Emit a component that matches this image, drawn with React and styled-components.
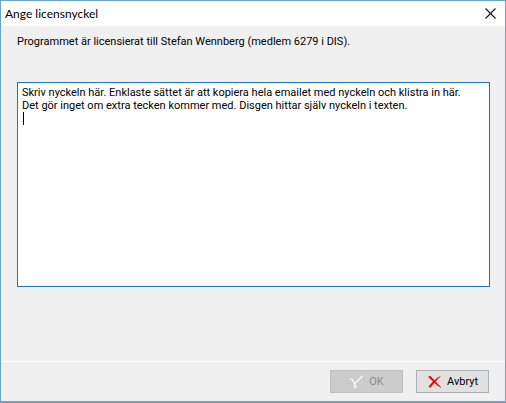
import React, { useEffect, useRef, useState } from "react";
import styled, { createGlobalStyle } from "styled-components";

const GlobalStyle = createGlobalStyle`
  * {
    box-sizing: border-box;
  }

  body {
    margin: 0;
  }
`;

const Dialog = styled.form`
  display: flex;
  flex-direction: column;
  min-height: 100vh;
  background: #f0f0f0;
  border: 1px solid #6ba5c3;
  border-bottom-width: 2px;
  color: #000000;
  font-family: Roboto, sans-serif;
  font-size: 11px;
  line-height: 13px;
`;

const TitleBar = styled.header`
  display: flex;
  align-items: center;
  justify-content: space-between;
  height: 25px;
  padding: 0 9px 0 4px;
  background: #ffffff;
`;

const Title = styled.h1`
  margin: 0;
  font-family: Lato, sans-serif;
  font-size: 12px;
  font-weight: 400;
  line-height: 16px;
`;

const CloseButton = styled.button`
  display: flex;
  padding: 0;
  border: 0;
  background: none;
`;

const Content = styled.main`
  display: flex;
  flex: 1;
  flex-direction: column;
  gap: 34px;
  padding: 9px 15px 74px 16px;
`;

const Licensee = styled.label`
  display: block;
`;

const KeyBox = styled.div`
  position: relative;
  display: flex;
  flex: 1;
`;

const KeyInput = styled.textarea`
  flex: 1;
  min-height: 64px;
  padding: 3px 4px;
  border: 1px solid #1a76b4;
  outline: 0;
  border-radius: 0;
  background: #ffffff;
  caret-color: transparent;
  color: inherit;
  font: inherit;
  resize: none;
`;

const Caret = styled.span`
  position: absolute;
  top: 30px;
  left: 6px;
  width: 1px;
  height: 13px;
  background: #000000;
  pointer-events: none;
`;

const Footer = styled.footer`
  display: flex;
  justify-content: flex-end;
  gap: 13px;
  padding: 8px 16px;
  border-top: 1px solid #ffffff;
`;

const ActionButton = styled.button`
  display: flex;
  align-items: center;
  justify-content: center;
  gap: 5px;
  width: 73px;
  height: 23px;
  padding: 0;
  border: 1px solid #adb2b5;
  background: #e1e1e1;
  color: #000000;
  font: inherit;

  &:disabled {
    border-color: #bfbfbf;
    background: #cccccc;
    color: #8b8b8b;
  }
`;

const CloseIcon = () =>
  <svg width="11" height="11" viewBox="0 0 11 11" aria-hidden="true">
    <path d="M.5.5l10 10M10.5.5l-10 10" stroke="#111" strokeWidth="1.1" />
  </svg>;

const CheckIcon = () =>
  <svg width="15" height="14" viewBox="0 0 15 14" aria-hidden="true">
    <path
      d="M1 4L3.5 4.5L5.5 9L13.5 1M5.5 9L6 13L7.5 10.5"
      fill="none"
      stroke="#fff"
      strokeWidth="1.1"
    />
  </svg>;

const CrossIcon = () =>
  <svg width="15" height="14" viewBox="0 0 15 14" aria-hidden="true">
    <path
      d="M1 1.5L3.5 1Q5.5 3.5 7.5 5.2Q9.8 2.8 13 1.2L13.5 1.8Q10.8 3.8 8.7 6.5Q11 9.3 14 12V12.8Q10.5 11 7.4 8Q5.2 10.2 4 12.3H1.2Q3 9.3 6 6.5Q3 4.2 1 1.5Z"
      fill="#dc0f17"
    />
  </svg>;

const App = () => {
  const input = useRef(null);
  const [value, setValue] = useState(
    "Skriv nyckeln här. Enklaste sättet är att kopiera hela emailet med nyckeln och klistra in här.\nDet gör inget om extra tecken kommer med. Disgen hittar själv nyckeln i texten.\n"
  );
  const [edited, setEdited] = useState(false);

  useEffect(() => {
    input.current.focus();
    input.current.setSelectionRange(value.length, value.length);
  }, []);

  const handleChange = event => {
    setValue(event.target.value);
    setEdited(true);
  };

  return (
    <Dialog onSubmit={event => event.preventDefault()}>
      <GlobalStyle />
      <TitleBar>
        <Title>Ange licensnyckel</Title>
        <CloseButton type="button" aria-label="Stäng">
          <CloseIcon />
        </CloseButton>
      </TitleBar>
      <Content>
        <Licensee htmlFor="key">
          Programmet är licensierat till Stefan Wennberg (medlem 6279 i DIS).
        </Licensee>
        <KeyBox>
          <KeyInput
            id="key"
            ref={input}
            value={value}
            onChange={handleChange}
            spellCheck={false}
            style={edited ? { caretColor: "#000000" } : undefined}
          />
          {!edited && <Caret />}
        </KeyBox>
      </Content>
      <Footer>
        <ActionButton disabled={!edited}>
          <CheckIcon />
          OK
        </ActionButton>
        <ActionButton type="button">
          <CrossIcon />
          Avbryt
        </ActionButton>
      </Footer>
    </Dialog>
  );
};

export default App;
